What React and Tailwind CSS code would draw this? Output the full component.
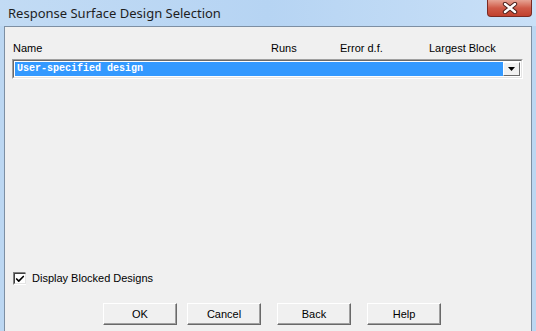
import { Check } from "lucide-react";

const buttons = [
  { label: "OK", cls: "ml-[98px]" },
  { label: "Cancel", cls: "ml-[10px]" },
  { label: "Back", cls: "ml-[16px]" },
  { label: "Help", cls: "ml-[16px]" },
];

function WinButton({ label, className }) {
  return (
    <button className={`${className} w-[74px] h-[22px] bg-[#f0f0f0] border border-t-white border-l-white border-r-[#696969] border-b-[#696969] shadow-[inset_-1px_-1px_0_#a0a0a0] text-[11px] text-black flex items-center justify-center`}>
      {label}
    </button>
  );
}

export default function App() {
  return (
    <div className="w-[536px] h-[331px] overflow-hidden flex flex-col bg-[#bcd7f2] font-['Liberation_Sans',Arial,sans-serif]">
      {/* Title bar */}
      <div className="h-[26px] flex-none flex items-start justify-between bg-gradient-to-r from-[#c2dbf4] via-[#b6d4f3] to-[#c9e0f7]">
        <span className="pl-[8px] pt-[5px] text-[13px] leading-[16px] text-[#1e1e1e] font-['Noto_Sans','Open_Sans',sans-serif]">
          Response Surface Design Selection
        </span>
        <div className="mr-[4px] w-[45px] h-[17px] rounded-b-[4px] border border-t-0 border-[#7a2a22] bg-gradient-to-b from-[#e6a394] via-[#cf5a48] to-[#c1412e] flex items-center justify-center">
          <svg width="16" height="12" viewBox="0 0 16 12">
            <path d="M3 2 L13 10 M13 2 L3 10" stroke="#4a1f1a" strokeWidth="4.4" strokeLinecap="round" />
            <path d="M3 2 L13 10 M13 2 L3 10" stroke="#ffffff" strokeWidth="2.4" strokeLinecap="round" />
          </svg>
        </div>
      </div>

      {/* Client area */}
      <div className="flex-1 mx-[4px] border border-b-0 border-[#7d8fa3] bg-[#f0f0f0] flex flex-col">
        {/* Column headers */}
        <div className="flex pt-[15px] pl-[8px] text-[11px] leading-[13px] text-black">
          <span className="w-[258px]">Name</span>
          <span className="w-[69px]">Runs</span>
          <span className="w-[89px]">Error d.f.</span>
          <span>Largest Block</span>
        </div>

        {/* Combo box */}
        <div className="mt-[4px] ml-[7px] w-[511px] h-[20px] border border-[#a0a0a0] border-b-white border-r-white flex">
          <div className="flex-1 flex border border-[#696969] border-b-[#e3e3e3] border-r-[#e3e3e3] bg-white p-[1px]">
            <div className="flex-1 bg-[#3399ff] flex items-center pl-[2px]">
              <span className="text-[10px] leading-[12px] font-bold text-white font-['Liberation_Mono','Courier_New',monospace]">
                User-specified design
              </span>
            </div>
            <div className="w-[17px] bg-[#f0f0f0] border border-t-white border-l-white border-r-[#696969] border-b-[#696969] flex items-center justify-center">
              <svg width="7" height="4" viewBox="0 0 7 4">
                <path d="M0 0 H7 L3.5 4 Z" fill="#000" />
              </svg>
            </div>
          </div>
        </div>

        <div className="flex-1" />

        {/* Checkbox */}
        <div className="flex items-center pl-[8px] mb-[18px]">
          <div className="w-[13px] h-[13px] border border-[#808080] border-b-white border-r-white flex">
            <div className="flex-1 border border-[#404040] border-b-[#e3e3e3] border-r-[#e3e3e3] bg-white flex items-center justify-center">
              <Check size={10} strokeWidth={4} color="#000" />
            </div>
          </div>
          <span className="ml-[6px] text-[11px] leading-[13px] text-black">Display Blocked Designs</span>
        </div>

        {/* Buttons */}
        <div className="flex pb-[6px]">
          {buttons.map((b) => (
            <WinButton key={b.label} label={b.label} className={b.cls} />
          ))}
        </div>
      </div>
    </div>
  );
}
